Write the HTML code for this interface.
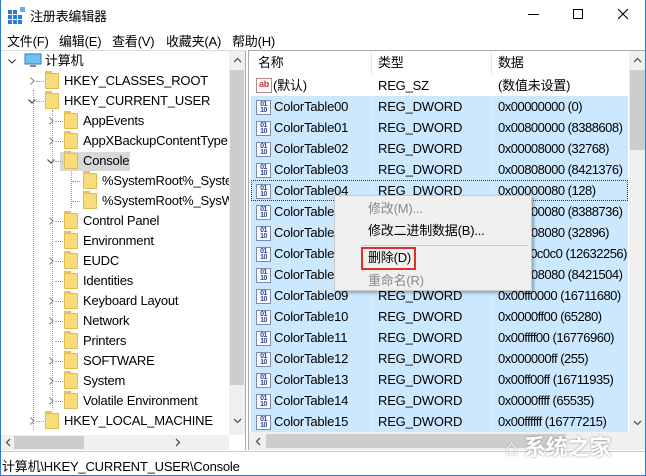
<!DOCTYPE html>
<html><head><meta charset="utf-8"><style>
*{margin:0;padding:0;box-sizing:border-box}
body{width:646px;height:476px;overflow:hidden;background:#fff;font-family:"Liberation Sans","Noto Sans CJK SC",sans-serif;font-size:13px;color:#000;position:relative;letter-spacing:-0.2px}
.a{position:absolute;white-space:nowrap}
.t{line-height:20px;height:20px}
.fold{position:absolute;width:14px;height:16px;background:#f8dc7c;border:1px solid #e3b94a;border-radius:1px}
.fold:before{content:"";position:absolute;left:-1px;top:-3px;width:7px;height:3px;background:#e8c35c}
.dot{position:absolute;border-top:1px dotted #999;width:8px}
.vd{position:absolute;border-left:1px dotted #999}
.ic{position:absolute;width:15px;height:15px;border:1px solid #7a8ab0;background:#fff;font-size:7px;line-height:6px;color:#2a3f9e;font-weight:bold;text-align:center;letter-spacing:-.5px;padding-top:1px}
.r{position:absolute;width:8px;height:8px}
</style></head><body>
<svg width="0" height="0" style="position:absolute"><defs>
<symbol id="cr" viewBox="0 0 8 8"><path d="M2.5 0.5 L6 4 L2.5 7.5" fill="none" stroke="#888" stroke-width="1.2"/></symbol>
<symbol id="cd" viewBox="0 0 8 8"><path d="M0.5 2.5 L4 6 L7.5 2.5" fill="none" stroke="#444" stroke-width="1.2"/></symbol>
</defs></svg>
<div class="a" style="left:0;top:0;width:646px;height:30px;background:#fff"></div>
<svg class="a" style="left:8px;top:6px" width="18" height="18"><rect x="0" y="4" width="4" height="4" fill="#2a7ad6"/><rect x="5" y="4" width="4" height="4" fill="#2a7ad6"/><rect x="0" y="9" width="4" height="4" fill="#2a7ad6"/><rect x="5" y="9" width="4" height="4" fill="#2a7ad6"/><rect x="10" y="9" width="4" height="4" fill="#2a7ad6"/><rect x="0" y="14" width="4" height="4" fill="#2a7ad6"/><rect x="5" y="14" width="4" height="4" fill="#2a7ad6"/><rect x="10" y="14" width="4" height="4" fill="#2a7ad6"/><rect x="12" y="1" width="5" height="5" fill="#5fb0f0"/></svg>
<div class="a" style="left:30px;top:6px;font-size:13px">注册表编辑器</div>
<div class="a" style="left:528px;top:14px;width:11px;border-top:1px solid #000"></div>
<div class="a" style="left:573px;top:9px;width:10px;height:10px;border:1px solid #000"></div>
<svg class="a" style="left:617px;top:8px" width="12" height="12"><path d="M1 1L11 11M11 1L1 11" stroke="#000" stroke-width="1.1"/></svg>
<div class="a" style="left:7px;top:31px">文件(F)</div>
<div class="a" style="left:59px;top:31px">编辑(E)</div>
<div class="a" style="left:112px;top:31px">查看(V)</div>
<div class="a" style="left:166px;top:31px">收藏夹(A)</div>
<div class="a" style="left:232px;top:31px">帮助(H)</div>
<!-- left pane -->
<div class="a" style="left:0;top:50px;width:246px;height:400px;border-right:1px solid #aaa;border-top:1px solid #ddd"></div>
<div class="a" style="left:229px;top:51px;width:16px;height:384px;background:#f0f0f0"></div>
<div class="a" style="left:230px;top:70px;width:14px;height:315px;background:#cdcdcd"></div>
<svg class="a" style="left:233px;top:57px" width="9" height="6"><path d="M1 5L4.5 1.5L8 5" fill="none" stroke="#555" stroke-width="1.3"/></svg>
<svg class="a" style="left:233px;top:418px" width="9" height="6"><path d="M1 1L4.5 4.5L8 1" fill="none" stroke="#555" stroke-width="1.3"/></svg>
<div class="a" style="left:0;top:435px;width:229px;height:15px;background:#f0f0f0"></div>
<div class="a" style="left:14px;top:436px;width:70px;height:13px;background:#cdcdcd"></div>
<svg class="a" style="left:5px;top:438px" width="6" height="9"><path d="M5 1L1.5 4.5L5 8" fill="none" stroke="#555" stroke-width="1.3"/></svg>
<svg class="a" style="left:175px;top:438px" width="6" height="9"><path d="M1 1L4.5 4.5L1 8" fill="none" stroke="#555" stroke-width="1.3"/></svg>
<div class="vd" style="left:33px;top:90px;height:340px"></div>
<div class="vd" style="left:52px;top:110px;height:300px"></div>
<div class="vd" style="left:71px;top:170px;height:38px"></div>
<svg class="r" style="left:8px;top:57px"><use href="#cd"/></svg>
<svg class="a" style="left:24px;top:53px" width="18" height="16"><rect x="1" y="1" width="16" height="10" fill="#6fc1f0" stroke="#3a7ab8"/><rect x="6" y="12" width="6" height="2" fill="#888"/></svg>
<div class="a t" style="left:45px;top:51px">计算机</div>
<svg class="r" style="left:28px;top:77px"><use href="#cr"/></svg><div class="dot" style="left:36px;top:81px"></div><div class="fold" style="left:45px;top:73px"></div><div class="a t" style="left:64px;top:71px">HKEY_CLASSES_ROOT</div>
<svg class="r" style="left:28px;top:97px"><use href="#cd"/></svg><div class="dot" style="left:36px;top:101px"></div><div class="fold" style="left:45px;top:93px"></div><div class="a t" style="left:64px;top:91px">HKEY_CURRENT_USER</div>
<svg class="r" style="left:47px;top:117px"><use href="#cr"/></svg><div class="dot" style="left:55px;top:121px"></div><div class="fold" style="left:64px;top:113px"></div><div class="a t" style="left:83px;top:111px">AppEvents</div>
<svg class="r" style="left:47px;top:137px"><use href="#cr"/></svg><div class="dot" style="left:55px;top:141px"></div><div class="fold" style="left:64px;top:133px"></div><div class="a t" style="left:83px;top:131px;width:146px;overflow:hidden">AppXBackupContentType</div>
<div class="a" style="left:60px;top:152px;width:70px;height:19px;background:#d9d9d9"></div>
<svg class="r" style="left:47px;top:157px"><use href="#cd"/></svg><div class="dot" style="left:55px;top:161px"></div><div class="fold" style="left:64px;top:153px"></div><div class="a t" style="left:83px;top:151px">Console</div>
<div class="dot" style="left:72px;top:181px"></div><div class="fold" style="left:83px;top:173px"></div><div class="a t" style="left:102px;top:171px;width:127px;overflow:hidden">%SystemRoot%_System32</div>
<div class="dot" style="left:72px;top:201px"></div><div class="fold" style="left:83px;top:193px"></div><div class="a t" style="left:102px;top:191px;width:127px;overflow:hidden">%SystemRoot%_SysWOW64</div>
<svg class="r" style="left:47px;top:217px"><use href="#cr"/></svg><div class="dot" style="left:55px;top:221px"></div><div class="fold" style="left:64px;top:213px"></div><div class="a t" style="left:83px;top:211px">Control Panel</div>
<div class="dot" style="left:55px;top:241px"></div><div class="fold" style="left:64px;top:233px"></div><div class="a t" style="left:83px;top:231px">Environment</div>
<svg class="r" style="left:47px;top:257px"><use href="#cr"/></svg><div class="dot" style="left:55px;top:261px"></div><div class="fold" style="left:64px;top:253px"></div><div class="a t" style="left:83px;top:251px">EUDC</div>
<div class="dot" style="left:55px;top:281px"></div><div class="fold" style="left:64px;top:273px"></div><div class="a t" style="left:83px;top:271px">Identities</div>
<svg class="r" style="left:47px;top:297px"><use href="#cr"/></svg><div class="dot" style="left:55px;top:301px"></div><div class="fold" style="left:64px;top:293px"></div><div class="a t" style="left:83px;top:291px">Keyboard Layout</div>
<svg class="r" style="left:47px;top:317px"><use href="#cr"/></svg><div class="dot" style="left:55px;top:321px"></div><div class="fold" style="left:64px;top:313px"></div><div class="a t" style="left:83px;top:311px">Network</div>
<div class="dot" style="left:55px;top:341px"></div><div class="fold" style="left:64px;top:333px"></div><div class="a t" style="left:83px;top:331px">Printers</div>
<svg class="r" style="left:47px;top:357px"><use href="#cr"/></svg><div class="dot" style="left:55px;top:361px"></div><div class="fold" style="left:64px;top:353px"></div><div class="a t" style="left:83px;top:351px">SOFTWARE</div>
<svg class="r" style="left:47px;top:377px"><use href="#cr"/></svg><div class="dot" style="left:55px;top:381px"></div><div class="fold" style="left:64px;top:373px"></div><div class="a t" style="left:83px;top:371px">System</div>
<svg class="r" style="left:47px;top:397px"><use href="#cr"/></svg><div class="dot" style="left:55px;top:401px"></div><div class="fold" style="left:64px;top:393px"></div><div class="a t" style="left:83px;top:391px">Volatile Environment</div>
<svg class="r" style="left:28px;top:417px"><use href="#cr"/></svg><div class="dot" style="left:36px;top:421px"></div><div class="fold" style="left:45px;top:413px"></div><div class="a t" style="left:64px;top:411px">HKEY_LOCAL_MACHINE</div>
<!-- right pane -->
<div class="a" style="left:248px;top:50px;width:398px;height:400px;border-left:1px solid #aaa;border-top:1px solid #aaa"></div>
<div class="a" style="left:371px;top:52px;height:22px;border-left:1px solid #e5e5e5"></div>
<div class="a" style="left:491px;top:52px;height:22px;border-left:1px solid #e5e5e5"></div>
<div class="a t" style="left:258px;top:53px">名称</div>
<div class="a t" style="left:378px;top:53px">类型</div>
<div class="a t" style="left:498px;top:53px">数据</div>
<div class="a" style="left:629px;top:51px;width:17px;height:381px;background:#f0f0f0"></div>
<div class="a" style="left:630px;top:70px;width:15px;height:80px;background:#cdcdcd"></div>
<svg class="a" style="left:633px;top:57px" width="9" height="6"><path d="M1 5L4.5 1.5L8 5" fill="none" stroke="#555" stroke-width="1.3"/></svg>
<svg class="a" style="left:633px;top:420px" width="9" height="6"><path d="M1 1L4.5 4.5L8 1" fill="none" stroke="#555" stroke-width="1.3"/></svg>
<div class="a" style="left:249px;top:432px;width:397px;height:18px;background:#f0f0f0"></div>
<div class="a" style="left:266px;top:434px;width:300px;height:14px;background:#cdcdcd"></div>
<svg class="a" style="left:255px;top:437px" width="6" height="9"><path d="M5 1L1.5 4.5L5 8" fill="none" stroke="#555" stroke-width="1.3"/></svg>
<div class="a" style="left:251px;top:96px;width:377px;height:336px;background:#cce8ff"></div>
<div class="a" style="left:371px;top:96px;height:336px;border-left:1px solid #d9ecfb"></div>
<div class="a" style="left:491px;top:96px;height:336px;border-left:1px solid #d9ecfb"></div>
<div class="a" style="left:256px;top:78px;width:16px;height:15px;border:1px solid #b88;background:#fff;color:#c33;font-size:9px;font-weight:bold;line-height:11px;text-align:center">ab</div>
<div class="a t" style="left:273px;top:76px">(默认)</div><div class="a t" style="left:378px;top:76px">REG_SZ</div><div class="a t" style="left:498px;top:76px">(数值未设置)</div>
<div id="rows"></div>
<div class="a" style="left:251px;top:180px;width:377px;height:21px;border:1px dotted #333"></div>
<div class="a" style="left:334px;top:195px;width:198px;height:96px;background:#f0f0f0;border:1px solid #ccc;box-shadow:2px 2px 3px rgba(0,0,0,.3)"></div>
<div class="a t" style="left:368px;top:199px;color:#888">修改(M)...</div>
<div class="a t" style="left:368px;top:221px">修改二进制数据(B)...</div>
<div class="a" style="left:362px;top:245px;width:166px;border-top:1px solid #ccc"></div>
<div class="a" style="left:361px;top:247px;width:55px;height:23px;border:2px solid #e0302a"></div>
<div class="a t" style="left:368px;top:248px">删除(D)</div>
<div class="a t" style="left:368px;top:271px;color:#888">重命名(R)</div>
<div class="a" style="left:0;top:451px;width:646px;height:25px;background:#fff;border-top:1px solid #ccc"></div>
<div class="a" style="left:2px;top:456px">计算机\HKEY_CURRENT_USER\Console</div>
<div class="a" style="left:505px;top:430px;color:#fff;font-size:22px;font-weight:bold;text-shadow:0 0 2px #888">⌂ 系统之家</div>
<script>
var d=[["00","0x00000000 (0)"],["01","0x00800000 (8388608)"],["02","0x00008000 (32768)"],["03","0x00808000 (8421376)"],["04","0x00000080 (128)"],["05","0x00800080 (8388736)"],["06","0x00008080 (32896)"],["07","0x00c0c0c0 (12632256)"],["08","0x00808080 (8421504)"],["09","0x00ff0000 (16711680)"],["10","0x0000ff00 (65280)"],["11","0x00ffff00 (16776960)"],["12","0x000000ff (255)"],["13","0x00ff00ff (16711935)"],["14","0x0000ffff (65535)"],["15","0x00ffffff (16777215)"]];
var h="";d.forEach(function(r,i){var y=97+i*21;h+='<div class="ic" style="left:256px;top:'+(y+3)+'px">01<br>10</div><div class="a t" style="left:274px;top:'+y+'px">ColorTable'+r[0]+'</div><div class="a t" style="left:378px;top:'+y+'px">REG_DWORD</div><div class="a t" style="left:498px;top:'+y+'px;width:130px;overflow:hidden;letter-spacing:-0.5px">'+r[1]+'</div>';});
document.getElementById("rows").innerHTML=h;
</script>
<div class="a" style="left:0;top:0;width:646px;height:476px;border:1px solid #2b79d0;border-top:none;pointer-events:none"></div>
</body></html>
